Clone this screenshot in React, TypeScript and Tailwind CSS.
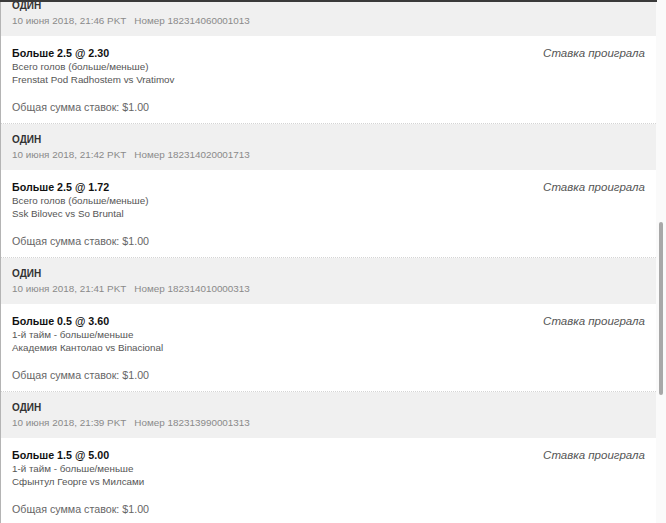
import React from "react";

type Bet = {
  date: string;
  number: string;
  title: string;
  market: string;
  teams: string;
};

const bets: Bet[] = [
  {
    date: "10 июня 2018, 21:46 PKT",
    number: "182314060001013",
    title: "Больше 2.5 @ 2.30",
    market: "Всего голов (больше/меньше)",
    teams: "Frenstat Pod Radhostem vs Vratimov",
  },
  {
    date: "10 июня 2018, 21:42 PKT",
    number: "182314020001713",
    title: "Больше 2.5 @ 1.72",
    market: "Всего голов (больше/меньше)",
    teams: "Ssk Bilovec vs So Bruntal",
  },
  {
    date: "10 июня 2018, 21:41 PKT",
    number: "182314010000313",
    title: "Больше 0.5 @ 3.60",
    market: "1-й тайм - больше/меньше",
    teams: "Академия Кантолао vs Binacional",
  },
  {
    date: "10 июня 2018, 21:39 PKT",
    number: "182313990001313",
    title: "Больше 1.5 @ 5.00",
    market: "1-й тайм - больше/меньше",
    teams: "Сфынтул Георге vs Милсами",
  },
];

function BetCard({ bet }: { bet: Bet }) {
  return (
    <div>
      {/* header strip */}
      <div className="bg-[#f0f0f0] pl-[11px] pt-[9px] pb-[8px]">
        <div className="text-[10px] leading-[14px] font-bold text-[#333]">ОДИН</div>
        <div className="mt-[1px] flex text-[9.9px] leading-[14px] text-[#8a8a8a]">
          <span>{bet.date}</span>
          <span className="ml-[8px]">Номер {bet.number}</span>
        </div>
      </div>

      {/* bet body */}
      <div className="flex justify-between bg-white pl-[11px] pr-[11px] pt-[10px] pb-[9px] border-b border-dotted border-[#d4d4d4]">
        <div>
          <div className="text-[10.7px] leading-[14px] font-bold text-[#111]">{bet.title}</div>
          <div className="text-[9.8px] leading-[13px] text-[#555]">{bet.market}</div>
          <div className="text-[9.8px] leading-[13px] text-[#555]">{bet.teams}</div>
          <div className="mt-[14px] text-[10.7px] leading-[14px] text-[#666]">Общая сумма ставок: $1.00</div>
        </div>
        <div className="text-[11.5px] leading-[14px] italic text-[#555]">Ставка проиграла</div>
      </div>
    </div>
  );
}

export default function App() {
  return (
    <main
      className="relative flex h-[523px] w-[666px] overflow-hidden bg-white"
      style={{ fontFamily: '"Liberation Sans", Arial, sans-serif' }}
    >
      {/* edge of the fixed bar above the list */}
      <div className="absolute left-0 top-0 z-10 h-[2px] w-[657px] bg-[#3a3a3a]" />

      <div className="w-[656px] shrink-0 border-l border-[#b4b4b4]">
        <div className="-mt-[10px]">
          {bets.map((bet) => (
            <BetCard key={bet.number} bet={bet} />
          ))}
        </div>
      </div>

      {/* scrollbar */}
      <div className="flex w-[10px] shrink-0 justify-center bg-[#fafafa] pt-[222px]">
        <div className="h-[173px] w-[4px] rounded-full bg-[#a8a8a8]" />
      </div>
    </main>
  );
}
